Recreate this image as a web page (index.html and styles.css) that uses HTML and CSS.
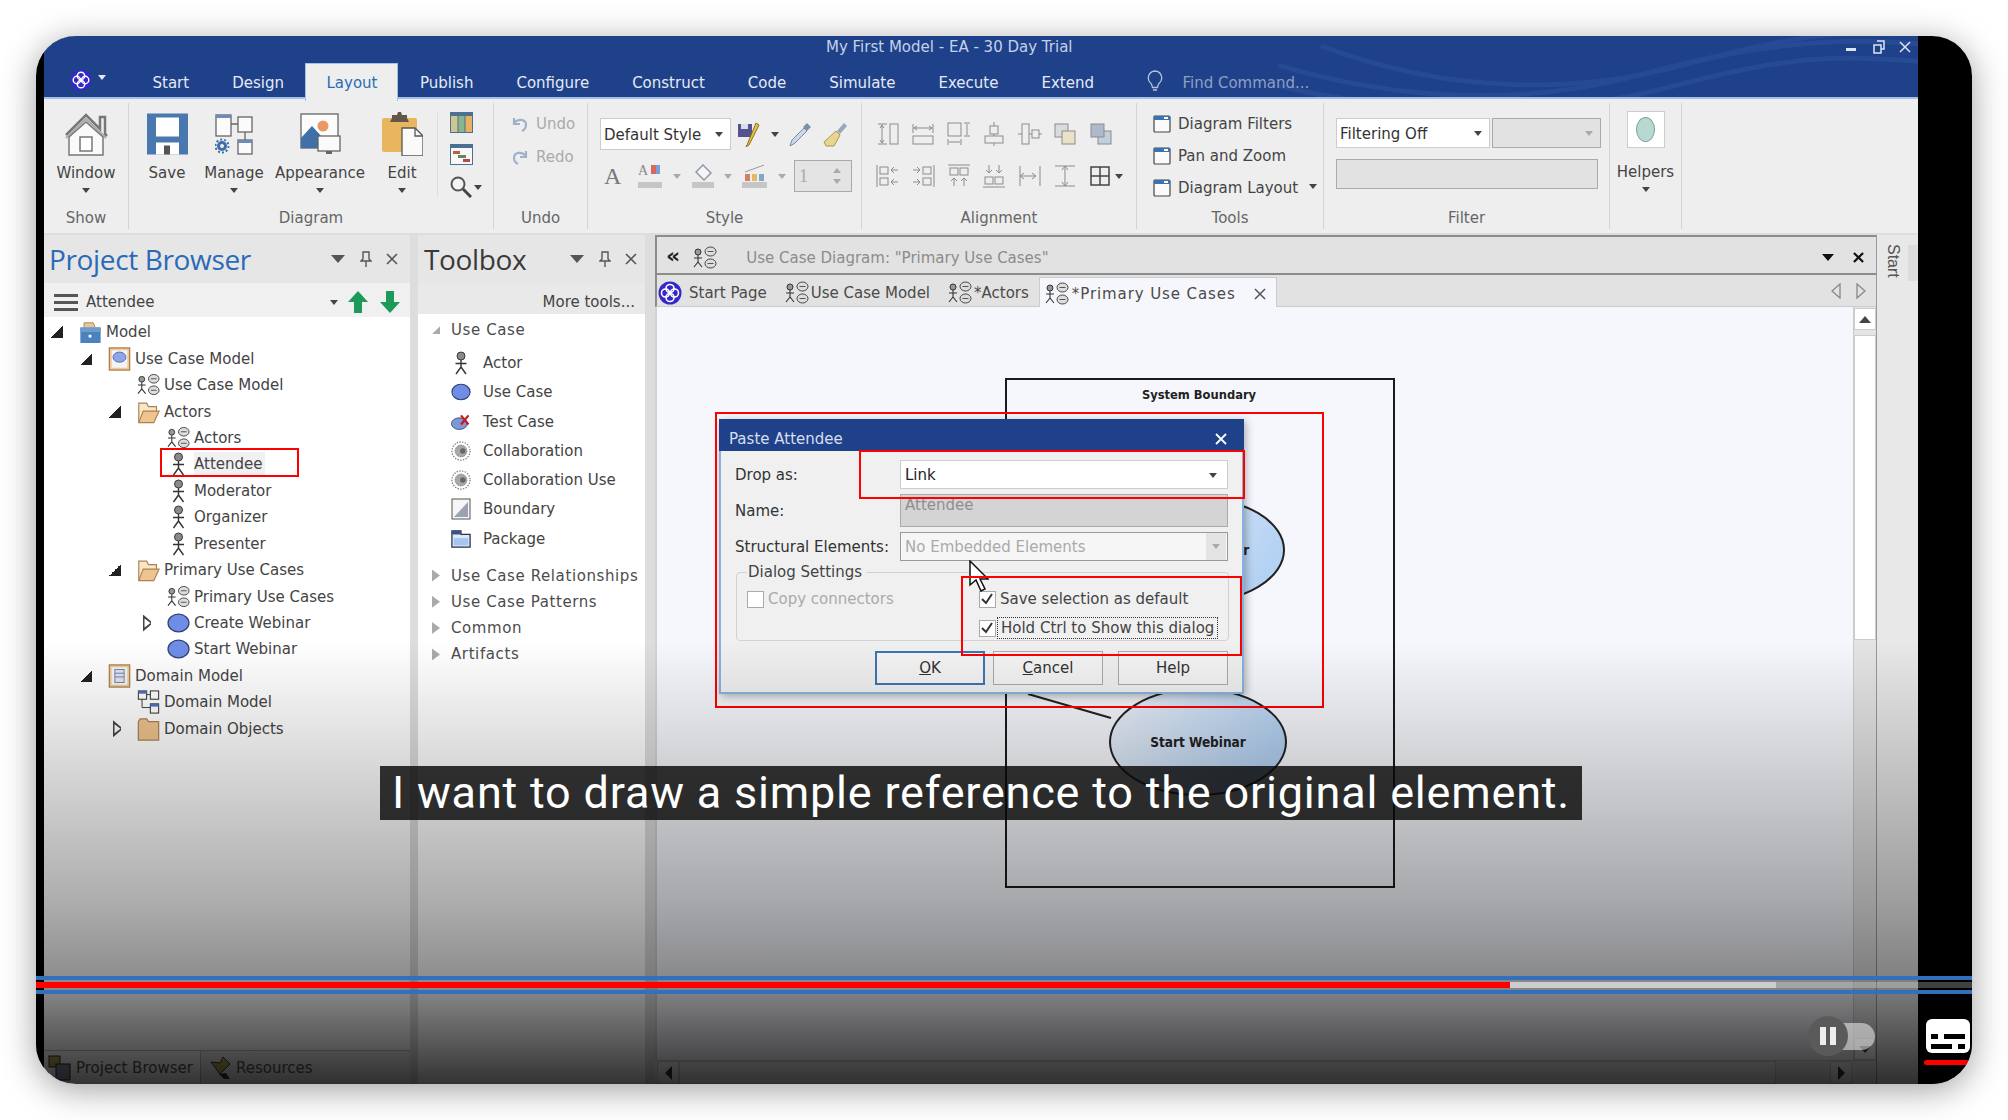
FILE: index.html
```html
<!DOCTYPE html>
<html lang="en">
<head>
    <meta charset="UTF-8">
    <meta name="viewport" content="width=device-width, initial-scale=1.0">
    <title>My First Model - EA - 30 Day Trial</title>
    <link rel="stylesheet" href="styles.css">
</head>
<body>
<svg class="sprite" xmlns="http://www.w3.org/2000/svg">
    <symbol id="logo" viewBox="0 0 24 24"><circle cx="12" cy="12" r="11.5" fill="#3527c9"/><g fill="none" stroke="#fff" stroke-width="1.6"><ellipse cx="12" cy="7.5" rx="4" ry="4"/><ellipse cx="12" cy="16.5" rx="4" ry="4"/><ellipse cx="7.5" cy="12" rx="4" ry="4"/><ellipse cx="16.5" cy="12" rx="4" ry="4"/></g></symbol>
    <symbol id="actor" viewBox="0 0 14 24"><circle cx="7" cy="5" r="4" fill="#8a8a8a" stroke="#3a3a3a"/><path d="M7 9v7M1.5 12.5h11M7 16l-5 7M7 16l5 7" stroke="#333" stroke-width="1.4" fill="none"/></symbol>
    <symbol id="ucd" viewBox="0 0 24 24"><circle cx="5" cy="6" r="3" fill="#999" stroke="#333"/><path d="M5 9v7M1 12h8M5 16l-4 5M5 16l4 5" stroke="#333" stroke-width="1.1" fill="none"/><g fill="#ddd" stroke="#444"><ellipse cx="17.500" cy="5.500" rx="5.500" ry="4.500"/><ellipse cx="17.500" cy="17.500" rx="5.500" ry="4.500"/></g><path d="M14.500 5.500h6M14.500 17.500h6" stroke="#555"/></symbol>
    <symbol id="pkg" viewBox="0 0 24 26"><path d="M5 8V3h10l2 5" fill="#eec694" stroke="#a98355"/><rect x="1" y="8" width="22" height="17" rx="1" fill="#4b82bd"/><rect x="1" y="8" width="22" height="5" fill="#6c9bcd"/><rect x="10" y="16" width="3" height="3" fill="#fff"/></symbol>
    <symbol id="ucmodel" viewBox="0 0 24 26"><rect x="1" y="1" width="22" height="24" fill="#f2c894" stroke="#a98355" stroke-width="1.400"/><rect x="3.500" y="3.500" width="17" height="19" fill="#f4f4f4"/><ellipse cx="12" cy="11" rx="7" ry="5.500" fill="#8ea6e8" stroke="#5469b2"/></symbol>
    <symbol id="dommodel" viewBox="0 0 24 26"><rect x="1" y="1" width="22" height="24" fill="#f2c894" stroke="#a98355" stroke-width="1.400"/><rect x="3.500" y="3.500" width="17" height="19" fill="#f4f4f4"/><rect x="7" y="6" width="10" height="14" fill="#dfe4ef" stroke="#6b7ca8"/><path d="M7 10h10M7 14h10" stroke="#6b7ca8"/></symbol>
    <symbol id="folderopen" viewBox="0 0 26 26"><path d="M2 25V3h9l2 4h9v5" fill="#fbe5c5" stroke="#a98355" stroke-width="1.300"/><path d="M2 25l5-13h18l-6 13z" fill="#f0c48e" stroke="#a98355" stroke-width="1.300"/></symbol>
    <symbol id="folder" viewBox="0 0 24 26"><path d="M1 25V5l2-3h7l2 3h11v20z" fill="#f0c48e" stroke="#a98355" stroke-width="1.300"/></symbol>
    <symbol id="usecase" viewBox="0 0 22 20"><ellipse cx="11" cy="10" rx="10" ry="8.500" fill="#6f8de6" stroke="#33416e" stroke-width="1.200"/></symbol>
    <symbol id="domd" viewBox="0 0 24 26"><g stroke="#333" fill="#fff" stroke-width="1.100"><rect x="1" y="1" width="9" height="9"/><rect x="14" y="1" width="9" height="9"/><rect x="14" y="15" width="9" height="10"/></g><rect x="1" y="1" width="9" height="3" fill="#4f6fc0"/><rect x="14" y="15" width="9" height="3" fill="#4f6fc0"/><path d="M10 5h4M5 10v9h9" stroke="#333" fill="none"/></symbol>
    <symbol id="tcase" viewBox="0 0 24 20"><ellipse cx="10" cy="12" rx="9.500" ry="7" fill="#7d98d6" stroke="#34426e"/><path d="M12 2l9 11M21 2l-9 11" stroke="#c6181f" stroke-width="2.600"/></symbol>
    <symbol id="collab" viewBox="0 0 22 22"><circle cx="11" cy="11" r="10" fill="none" stroke="#777" stroke-width="1.300" stroke-dasharray="1.500 1.500"/><circle cx="11" cy="11" r="6.500" fill="#a8a8a8" stroke="#666" stroke-dasharray="1 1"/><circle cx="13" cy="11" r="3" fill="#666"/></symbol>
    <symbol id="bound" viewBox="0 0 20 22"><rect x="1" y="1" width="18" height="20" fill="#f6f6f6" stroke="#555"/><path d="M3 19L17 4v15z" fill="#9aa2b2"/></symbol>
    <symbol id="tbpkg" viewBox="0 0 22 20"><path d="M1 1h10v4h10v14H1z" fill="#dbe6f7" stroke="#26324f" stroke-width="1.400"/><rect x="1" y="1" width="10" height="4" fill="#3b5184"/><path d="M3 9h16v8H3z" fill="#a8c5ee"/></symbol>
    <symbol id="win" viewBox="0 0 18 18"><rect x="1" y="1" width="16" height="16" rx="1" fill="#fbfbfb" stroke="#444" stroke-width="1.200"/><rect x="1" y="1" width="16" height="4" fill="#3973b3"/><rect x="11" y="2" width="4" height="2" fill="#fff"/></symbol>
</svg>

<div class="video">
    <div class="app">
        <header class="titlebar">
            <svg class="waves" viewBox="0 0 600 63" preserveAspectRatio="none"><g fill="none" stroke="#264a94" stroke-width="5"><path d="M0 30C120 70 240 70 340 40S520 0 600 8"/><path d="M40 10C160 60 280 60 380 30S520 -4 600 -6"/><path d="M-20 46C120 86 260 84 370 52S520 20 600 26"/></g></svg>
            <div class="title-row">
                <span class="app-title">My First Model - EA - 30 Day Trial</span>
                <div class="win-ctl">
                    <span class="min"></span>
                    <svg class="rest" viewBox="0 0 12 14"><path d="M4 1h7v8H8M1 5h7v8H1z" fill="none" stroke="#dce4f2" stroke-width="1.500"/></svg>
                    <svg class="cls" viewBox="0 0 12 12"><path d="M1 1l10 10M11 1L1 11" stroke="#dce4f2" stroke-width="1.500"/></svg>
                </div>
            </div>
            <nav class="tab-row">
                <svg class="logo"><use href="#logo"/></svg>
                <span class="caret wh logo-caret"></span>
                <a class="tab">Start</a>
                <a class="tab">Design</a>
                <a class="tab active">Layout</a>
                <a class="tab">Publish</a>
                <a class="tab">Configure</a>
                <a class="tab">Construct</a>
                <a class="tab">Code</a>
                <a class="tab">Simulate</a>
                <a class="tab">Execute</a>
                <a class="tab">Extend</a>
                <svg class="bulb" viewBox="0 0 16 22"><path d="M8 1a7 7 0 0 0-4 12.500c1 1 1 2.500 1.500 4h5c.5-1.500.5-3 1.500-4A7 7 0 0 0 8 1zM6 20h4" fill="none" stroke="#b6c3dc" stroke-width="1.300"/></svg>
                <span class="find">Find Command...</span>
            </nav>
        </header>

        <section class="ribbon">
            <div class="group g-show">
                <div class="group-body">
                    <div class="big">
                        <svg viewBox="0 0 44 44" width="44" height="44"><path d="M2 23L22 3l14 14V5h5v17l2 2" fill="none" stroke="#777" stroke-width="2.500"/><path d="M2 26L22 7l20 19" fill="none" stroke="#aaa" stroke-width="2"/><path d="M5 25v18h34V25L22 10z" fill="#fafafa" stroke="#777" stroke-width="1.500"/><rect x="16" y="25" width="12" height="14" fill="#fff" stroke="#777" stroke-width="1.500"/></svg>
                        <span class="label">Window</span>
                        <span class="caret"></span>
                    </div>
                </div>
                <div class="group-name">Show</div>
            </div>

            <div class="group g-diagram">
                <div class="group-body">
                    <div class="big w50">
                        <svg viewBox="0 0 41 41" width="41" height="44"><path d="M0 0h41v41H0z" fill="#4878ad"/><rect x="9" y="4" width="23" height="19" fill="#fff"/><rect x="9" y="29" width="23" height="12" fill="#fff"/><rect x="17" y="32" width="6" height="9" fill="#555"/></svg>
                        <span class="label">Save</span>
                    </div>
                    <div class="big w64">
                        <svg viewBox="0 0 38 40" width="38" height="44"><g fill="#fbfbfb" stroke="#666" stroke-width="1.300"><rect x="1" y="1" width="15" height="21"/><rect x="23" y="3" width="14" height="15"/><rect x="23" y="26" width="14" height="14"/></g><rect x="1" y="1" width="15" height="3" fill="#6a8cbb"/><rect x="23" y="26" width="14" height="3" fill="#6a8cbb"/><path d="M16 10h7M30 18v8" stroke="#666" stroke-width="1.300"/><circle cx="7" cy="32" r="5" fill="#3d6fa8"/><circle cx="7" cy="32" r="2" fill="#eee"/><circle cx="7" cy="32" r="6.500" fill="none" stroke="#3d6fa8" stroke-width="2" stroke-dasharray="2 2"/></svg>
                        <span class="label">Manage</span>
                        <span class="caret"></span>
                    </div>
                    <div class="big w94">
                        <svg viewBox="0 0 41 42" width="41" height="44"><rect x="1" y="1" width="37" height="34" fill="#fcfcfc" stroke="#666" stroke-width="1.300"/><circle cx="23" cy="13" r="5.500" fill="#e99a63"/><path d="M1 35V25l11-12 11 12v10z" fill="#3f70a8"/><rect x="18" y="23" width="22" height="15" fill="#fafafa" stroke="#666" stroke-width="1.300"/><path d="M26 38h6v3h-6z" fill="#666"/></svg>
                        <span class="label">Appearance</span>
                        <span class="caret"></span>
                    </div>
                    <div class="big w50 edit">
                        <svg viewBox="0 0 41 44" width="41" height="44"><rect x="0" y="6" width="35" height="34" rx="2" fill="#e8b65e"/><path d="M10 6V3h5l1-3h3l1 3h5v3l2 4H8z" fill="#63574b"/><path d="M20 16h13l8 8v20H20z" fill="#fafafa" stroke="#555" stroke-width="1.300"/><path d="M33 16v8h8" fill="none" stroke="#555" stroke-width="1.300"/></svg>
                        <span class="label">Edit</span>
                        <span class="caret"></span>
                    </div>
                    <div class="vsep"></div>
                    <div class="small-col">
                        <svg viewBox="0 0 23 21" width="23" height="21"><rect width="23" height="21" fill="#4c6f92"/><rect x="1" y="4" width="6.500" height="16" fill="#cbc78e"/><rect x="8.500" y="4" width="6" height="16" fill="#88b48f"/><rect x="15.500" y="4" width="6.500" height="16" fill="#e8b15e"/></svg>
                        <svg viewBox="0 0 23 21" width="23" height="21"><rect x=".5" y=".5" width="22" height="20" fill="#f8f8f8" stroke="#4c6f92"/><rect width="23" height="4" fill="#4c6f92"/><rect x="3" y="7" width="7" height="3" fill="#c25a4a"/><rect x="8" y="11" width="8" height="3" fill="#5a8a62"/><rect x="13" y="15" width="7" height="3" fill="#b84a4a"/></svg>
                        <div class="mag"><svg viewBox="0 0 22 22" width="22" height="22"><circle cx="8" cy="8" r="6.500" fill="#f4f4f4" stroke="#555" stroke-width="2"/><path d="M13 13l8 8" stroke="#444" stroke-width="3"/></svg><span class="caret"></span></div>
                    </div>
                </div>
                <div class="group-name">Diagram</div>
            </div>

            <div class="group g-undo">
                <div class="group-body">
                    <div class="undo-row">
                        <svg viewBox="0 0 18 18" width="18" height="18"><path d="M3 3v6h6M3 8c4-5 12-4 12 2 0 3-2 5-4 6" fill="none" stroke="#9fb3c8" stroke-width="2.200"/></svg>
                        <span>Undo</span>
                    </div>
                    <div class="undo-row">
                        <svg viewBox="0 0 18 18" width="18" height="18"><path d="M15 3v6H9M15 8C11 3 3 4 3 10c0 3 2 5 4 6" fill="none" stroke="#9fb3c8" stroke-width="2.200"/></svg>
                        <span>Redo</span>
                    </div>
                </div>
                <div class="group-name">Undo</div>
            </div>

            <div class="group g-style">
                <div class="group-body">
                    <div class="style-row first">
                        <div class="combo style-combo"><span>Default Style</span><span class="caret"></span></div>
                        <svg class="m7" viewBox="0 0 22 26" width="22" height="26"><rect x="0" y="3" width="14" height="13" fill="#54528f"/><rect x="3" y="3" width="7" height="5" fill="#dcdcf0"/><path d="M18 2L9 24l-1 2 3-2 10-20z" fill="#e5c34a" stroke="#8a6f1c"/></svg>
                        <span class="caret m11"></span>
                        <svg class="m9" viewBox="0 0 24 25" width="24" height="25"><path d="M2 24l2-6L16 6l3 3L7 21z" fill="#cbd8ea" stroke="#7a8aa4"/><path d="M15 5l4-4 4 4-4 4z" fill="#7e8fa8"/></svg>
                        <svg class="m11" viewBox="0 0 24 25" width="24" height="25"><path d="M1 20l12-11 4 4-6 11H3z" fill="#e8d592" stroke="#a99650"/><path d="M14 9l7-8 3 3-7 8z" fill="#9aa8bd"/></svg>
                    </div>
                    <div class="style-row second">
                        <span class="font-a">A</span>
                        <div class="sw"><span class="sw-a">A</span><i></i></div>
                        <span class="caret lt m11"></span>
                        <svg class="m11" viewBox="0 0 22 24" width="22" height="24"><path d="M11 1l8 8-7 7-8-8z" fill="#f5f5f5" stroke="#8a96a8" stroke-width="1.400"/><rect y="18" width="22" height="6" fill="#c6c6c6"/></svg>
                        <span class="caret lt m10"></span>
                        <svg class="m10" viewBox="0 0 25 24" width="25" height="24"><path d="M3 8L22 1" stroke="#999"/><rect x="3" y="10" width="5" height="7" fill="#d87c64"/><rect x="10" y="10" width="5" height="7" fill="#e6b76b"/><rect x="17" y="10" width="5" height="7" fill="#7fa8cf"/><rect y="18" width="25" height="6" fill="#c6c6c6"/></svg>
                        <span class="caret lt m11"></span>
                        <div class="spin"><span>1</span><div class="spin-arrows"><i></i><i></i></div></div>
                    </div>
                </div>
                <div class="group-name">Style</div>
            </div>

            <div class="group g-align">
                <div class="group-body align-grid">
                    <svg viewBox="0 0 24 24"><g fill="none" stroke="#8b8b8b"><rect x="14" y="2" width="8" height="20"/><path d="M2 2h9M2 22h9M6 3v18M4 6l2-3 2 3M4 18l2 3 2-3"/></g></svg>
                    <svg viewBox="0 0 24 24"><g fill="none" stroke="#8b8b8b"><rect x="2" y="14" width="20" height="8"/><path d="M2 2v9M22 2v9M3 6h18M6 4L3 6l3 2M18 4l3 2-3 2"/></g></svg>
                    <svg viewBox="0 0 24 24"><g fill="none" stroke="#8b8b8b"><rect x="1" y="1" width="13" height="13"/><path d="M17 1h6M20 2v11M17 14h6M1 17v6M14 17v6M2 20h11"/></g></svg>
                    <svg viewBox="0 0 24 24"><g fill="none" stroke="#8b8b8b"><rect x="8" y="4" width="8" height="8"/><rect x="3" y="14" width="18" height="7"/><path d="M12 0v4M12 12v2M12 21v3"/></g></svg>
                    <svg viewBox="0 0 24 24"><g fill="none" stroke="#8b8b8b"><rect x="4" y="2" width="7" height="20"/><rect x="14" y="8" width="7" height="8"/><path d="M0 12h4M11 12h3M21 12h3"/></g></svg>
                    <svg viewBox="0 0 24 24"><rect x="2" y="2" width="13" height="13" fill="#d8dbe0" stroke="#8b8b8b"/><rect x="9" y="9" width="13" height="13" fill="#e9e2c6" stroke="#8b8b8b"/></svg>
                    <svg viewBox="0 0 24 24"><rect x="9" y="9" width="13" height="13" fill="#c4cfdd" stroke="#8b8b8b"/><rect x="2" y="2" width="13" height="13" fill="#aebacb" stroke="#8b8b8b"/></svg>
                    <svg viewBox="0 0 24 24"><g fill="none" stroke="#8b8b8b"><path d="M1 1v22"/><rect x="4" y="3" width="8" height="7"/><rect x="4" y="14" width="8" height="7"/><path d="M22 6h-7M18 3l-3 3 3 3M22 18h-7M18 15l-3 3 3 3"/></g></svg>
                    <svg viewBox="0 0 24 24"><g fill="none" stroke="#8b8b8b"><path d="M23 1v22"/><rect x="12" y="3" width="8" height="7"/><rect x="12" y="14" width="8" height="7"/><path d="M2 6h7M6 3l3 3-3 3M2 18h7M6 15l3 3-3 3"/></g></svg>
                    <svg viewBox="0 0 24 24"><g fill="none" stroke="#8b8b8b"><path d="M1 1h22"/><rect x="3" y="4" width="8" height="7"/><rect x="13" y="4" width="8" height="7"/><path d="M7 22v-8M4 17l3-3 3 3M17 22v-8M14 17l3-3 3 3"/></g></svg>
                    <svg viewBox="0 0 24 24"><g fill="none" stroke="#8b8b8b"><path d="M1 23h22"/><rect x="3" y="13" width="8" height="7"/><rect x="13" y="13" width="8" height="7"/><path d="M7 1v8M4 6l3 3 3-3M17 1v8M14 6l3 3 3-3"/></g></svg>
                    <svg viewBox="0 0 24 24"><g fill="none" stroke="#8b8b8b"><path d="M2 2v20M22 2v20M2 12h15M6 9l-4 3 4 3M14 9l4 3-4 3"/></g></svg>
                    <svg viewBox="0 0 24 24"><g fill="none" stroke="#8b8b8b"><path d="M2 2h20M2 22h20M12 2v20M9 6l3-4 3 4M9 18l3 4 3-4"/></g></svg>
                    <div class="grid-btn"><svg viewBox="0 0 22 22" width="22" height="22"><rect x="2" y="2" width="18" height="18" fill="none" stroke="#444" stroke-width="1.500"/><path d="M11 2v18M2 11h18" stroke="#444" stroke-width="1.500"/></svg><span class="caret"></span></div>
                </div>
                <div class="group-name">Alignment</div>
            </div>

            <div class="group g-tools">
                <div class="group-body">
                    <div class="tool-row"><svg width="18" height="18"><use href="#win"/></svg><span>Diagram Filters</span></div>
                    <div class="tool-row"><svg width="18" height="18"><use href="#win"/></svg><span>Pan and Zoom</span></div>
                    <div class="tool-row"><svg width="18" height="18"><use href="#win"/></svg><span>Diagram Layout</span><span class="caret tool-caret"></span></div>
                </div>
                <div class="group-name">Tools</div>
            </div>

            <div class="group g-filter">
                <div class="group-body">
                    <div class="filter-top">
                        <div class="combo filter-combo"><span>Filtering Off</span><span class="caret"></span></div>
                        <div class="combo off-combo"><span class="caret lt"></span></div>
                    </div>
                    <div class="filter-input"></div>
                </div>
                <div class="group-name">Filter</div>
            </div>

            <div class="group g-helpers">
                <div class="group-body">
                    <div class="big">
                        <div class="helper-btn"><span></span></div>
                        <span class="label">Helpers</span>
                        <span class="caret"></span>
                    </div>
                </div>
            </div>
        </section>

        <main class="main">
            <aside class="browser">
                <div class="pane-head">
                    <h2 class="browser-title">Project Browser</h2>
                    <div class="pane-ctl browser-ctl">
                        <span class="caret big-caret"></span>
                        <svg viewBox="0 0 12 16" width="12" height="16"><path d="M3 1h6v7l2 2H1l2-2zM6 10v6" fill="none" stroke="#555" stroke-width="1.400"/></svg>
                        <svg viewBox="0 0 12 12" width="12" height="12"><path d="M1 1l10 10M11 1L1 11" stroke="#555" stroke-width="1.600"/></svg>
                    </div>
                </div>
                <div class="browser-bar">
                    <div class="burger"><i></i><i></i><i></i></div>
                    <span class="bar-name">Attendee</span>
                    <span class="caret bar-caret"></span>
                    <svg class="arr-up" viewBox="0 0 20 22" width="20" height="22"><path d="M10 0l10 11h-6v11H6V11H0z" fill="#1c9a5a"/></svg>
                    <svg class="arr-down" viewBox="0 0 20 22" width="20" height="22"><path d="M10 22L20 11h-6V0H6v11H0z" fill="#1c9a5a"/></svg>
                </div>
                <div class="tree">
                    <div class="row lv1"><span class="tri open"></span><svg class="ico"><use href="#pkg"/></svg><span>Model</span></div>
                    <div class="row lv2"><span class="tri open"></span><svg class="ico"><use href="#ucmodel"/></svg><span>Use Case Model</span></div>
                    <div class="row lv3"><span class="tri"></span><svg class="ico"><use href="#ucd"/></svg><span>Use Case Model</span></div>
                    <div class="row lv3"><span class="tri open"></span><svg class="ico"><use href="#folderopen"/></svg><span>Actors</span></div>
                    <div class="row lv4"><span class="tri"></span><svg class="ico"><use href="#ucd"/></svg><span>Actors</span></div>
                    <div class="row lv4"><span class="tri"></span><svg class="ico"><use href="#actor"/></svg><span class="sel">Attendee</span></div>
                    <div class="row lv4"><span class="tri"></span><svg class="ico"><use href="#actor"/></svg><span>Moderator</span></div>
                    <div class="row lv4"><span class="tri"></span><svg class="ico"><use href="#actor"/></svg><span>Organizer</span></div>
                    <div class="row lv4"><span class="tri"></span><svg class="ico"><use href="#actor"/></svg><span>Presenter</span></div>
                    <div class="row lv3"><span class="tri open"></span><svg class="ico"><use href="#folderopen"/></svg><span>Primary Use Cases</span></div>
                    <div class="row lv4"><span class="tri"></span><svg class="ico"><use href="#ucd"/></svg><span>Primary Use Cases</span></div>
                    <div class="row lv4"><span class="tri shut"></span><svg class="ico"><use href="#usecase"/></svg><span>Create Webinar</span></div>
                    <div class="row lv4"><span class="tri"></span><svg class="ico"><use href="#usecase"/></svg><span>Start Webinar</span></div>
                    <div class="row lv2"><span class="tri open"></span><svg class="ico"><use href="#dommodel"/></svg><span>Domain Model</span></div>
                    <div class="row lv3"><span class="tri"></span><svg class="ico"><use href="#domd"/></svg><span>Domain Model</span></div>
                    <div class="row lv3"><span class="tri shut"></span><svg class="ico"><use href="#folder"/></svg><span>Domain Objects</span></div>
                    <div class="mark tree-mark"></div>
                </div>
                <div class="browser-tabs">
                    <div class="btab on">
                        <svg viewBox="0 0 24 26" width="24" height="26"><rect x="1" y="1" width="11" height="11" fill="#b9a94e" stroke="#333"/><rect x="8" y="9" width="14" height="16" fill="#8a93ad" stroke="#222"/></svg>
                        <span>Project Browser</span>
                    </div>
                    <div class="btab">
                        <svg viewBox="0 0 24 24" width="24" height="24"><path d="M2 6l9 12 10-10-7-7-3 6z" fill="#b9a94e" stroke="#333"/><path d="M10 18l5 5h6l-4-6z" fill="#333"/></svg>
                        <span>Resources</span>
                    </div>
                </div>
            </aside>

            <div class="split"></div>

            <aside class="toolbox">
                <div class="pane-head">
                    <h2 class="toolbox-title">Toolbox</h2>
                    <div class="pane-ctl toolbox-ctl">
                        <span class="caret big-caret"></span>
                        <svg viewBox="0 0 12 16" width="12" height="16"><path d="M3 1h6v7l2 2H1l2-2zM6 10v6" fill="none" stroke="#555" stroke-width="1.400"/></svg>
                        <svg viewBox="0 0 12 12" width="12" height="12"><path d="M1 1l10 10M11 1L1 11" stroke="#555" stroke-width="1.600"/></svg>
                    </div>
                </div>
                <div class="more-tools">More tools...</div>
                <div class="tools-list">
                    <div class="tb-group first">
                        <span class="tb-tri open"></span>Use Case</div>
                    <div class="tb-item"><svg class="tb-ico"><use href="#actor"/></svg><span>Actor</span></div>
                    <div class="tb-item"><svg class="tb-ico"><use href="#usecase"/></svg><span>Use Case</span></div>
                    <div class="tb-item"><svg class="tb-ico"><use href="#tcase"/></svg><span>Test Case</span></div>
                    <div class="tb-item"><svg class="tb-ico"><use href="#collab"/></svg><span>Collaboration</span></div>
                    <div class="tb-item"><svg class="tb-ico"><use href="#collab"/></svg><span>Collaboration Use</span></div>
                    <div class="tb-item"><svg class="tb-ico"><use href="#bound"/></svg><span>Boundary</span></div>
                    <div class="tb-item last"><svg class="tb-ico"><use href="#tbpkg"/></svg><span>Package</span></div>
                    <div class="tb-group"><span class="tb-tri"></span>Use Case Relationships</div>
                    <div class="tb-group"><span class="tb-tri"></span>Use Case Patterns</div>
                    <div class="tb-group"><span class="tb-tri"></span>Common</div>
                    <div class="tb-group"><span class="tb-tri"></span>Artifacts</div>
                </div>
            </aside>

            <div class="split wide"></div>

            <section class="doc">
                <div class="doc-head">
                    <span class="chevrons">«</span>
                    <svg class="doc-ico"><use href="#ucd"/></svg>
                    <span class="doc-title">Use Case Diagram: "Primary Use Cases"</span>
                    <span class="caret doc-caret"></span>
                    <svg class="doc-x" viewBox="0 0 12 12" width="11" height="11"><path d="M1 1l10 10M11 1L1 11" stroke="#111" stroke-width="2.400"/></svg>
                </div>
                <div class="doc-tabs">
                    <div class="dtab first"><svg class="dt-logo"><use href="#logo"/></svg>Start Page</div>
                    <div class="dtab"><svg class="dt-ico"><use href="#ucd"/></svg>Use Case Model</div>
                    <div class="dtab"><svg class="dt-ico"><use href="#ucd"/></svg>*Actors</div>
                    <div class="dtab active"><svg class="dt-ico"><use href="#ucd"/></svg><span class="spaced">*Primary Use Cases</span>
                        <svg class="dt-x" viewBox="0 0 12 12" width="12" height="12"><path d="M1 1l10 10M11 1L1 11" stroke="#555" stroke-width="1.500"/></svg>
                    </div>
                    <div class="tab-nav">
                        <svg viewBox="0 0 10 16" width="10" height="16"><path d="M9 1L1 8l8 7z" fill="none" stroke="#888" stroke-width="1.300"/></svg>
                        <svg viewBox="0 0 10 16" width="10" height="16"><path d="M1 1l8 7-8 7z" fill="none" stroke="#888" stroke-width="1.300"/></svg>
                    </div>
                </div>
                <div class="doc-body">
                    <div class="canvas">
                        <svg class="diagram" viewBox="0 0 1198 753" width="1198" height="753">
                            <defs>
                                <linearGradient id="uc" x1="0" x2="1" y1="0" y2=".4"><stop offset="0" stop-color="#eef3fa"/><stop offset="1" stop-color="#b4d2f3"/></linearGradient>
                            </defs>
                            <rect x="351" y="72" width="388" height="508" fill="none" stroke="#1b1b1b" stroke-width="2"/>
                            <text x="544" y="92" class="dg-text" text-anchor="middle">System Boundary</text>
                            <ellipse cx="541" cy="243" rx="88" ry="52" fill="url(#uc)" stroke="#222" stroke-width="2"/>
                            <text x="541" y="248" class="dg-text big-dg" text-anchor="middle">Create Webinar</text>
                            <ellipse cx="543" cy="435" rx="88" ry="53" fill="url(#uc)" stroke="#222" stroke-width="2"/>
                            <text x="543" y="440" class="dg-text big-dg" text-anchor="middle">Start Webinar</text>
                            <path d="M373 387L456 411" stroke="#222" stroke-width="2"/>
                        </svg>

                        <div class="dialog">
                            <div class="dlg-title"><span>Paste Attendee</span>
                                <svg viewBox="0 0 12 12" width="12" height="12"><path d="M1 1l10 10M11 1L1 11" stroke="#fff" stroke-width="1.800"/></svg>
                            </div>
                            <div class="dlg-body">
                                <div class="dlg-form">
                                    <label>Drop as:</label>
                                    <div class="sel-box f29"><span class="dark">Link</span><span class="caret"></span></div>
                                    <label>Name:</label>
                                    <div class="name-box">Attendee</div>
                                    <label>Structural Elements:</label>
                                    <div class="sel-box f29 off"><span>No Embedded Elements</span><span class="off-arrow"><span class="caret lt"></span></span></div>
                                </div>
                                <fieldset class="dlg-set">
                                    <legend>Dialog Settings</legend>
                                    <div class="set-grid">
                                        <div class="chk off"><span class="box"></span><span>Copy connectors</span></div>
                                        <div class="set-right">
                                            <div class="chk"><span class="box"><svg viewBox="0 0 14 14" width="14" height="14"><path d="M2 7l4 4 6-9" fill="none" stroke="#333" stroke-width="2"/></svg></span><span>Save selection as default</span></div>
                                            <div class="chk"><span class="box"><svg viewBox="0 0 14 14" width="14" height="14"><path d="M2 7l4 4 6-9" fill="none" stroke="#333" stroke-width="2"/></svg></span><span class="focus">Hold Ctrl to Show this dialog</span></div>
                                        </div>
                                    </div>
                                </fieldset>
                                <div class="dlg-btns">
                                    <button class="btn def"><u>O</u>K</button>
                                    <button class="btn"><u>C</u>ancel</button>
                                    <button class="btn help">Help</button>
                                </div>
                            </div>
                        </div>

                        <svg class="cursor" viewBox="0 0 20 32" width="20" height="32"><path d="M1 1v24l6-5 5 11 4-2-5-10h8z" fill="#fff" stroke="#111" stroke-width="1.500"/></svg>

                        <div class="mark box-outer"></div>
                        <div class="mark box-drop"></div>
                        <div class="mark box-chk"></div>
                    </div>
                    <div class="vscroll">
                        <div class="sb-btn"><span class="up"></span></div>
                        <div class="sb-thumb"></div>
                        <div class="sb-btn low"><span class="dn"></span></div>
                    </div>
                </div>
                <div class="hscroll">
                    <div class="hs-btn"><span class="lf"></span></div>
                    <div class="hs-thumb"></div>
                    <div class="hs-btn right"><span class="rt"></span></div>
                </div>
            </section>

            <aside class="side">
                <span class="side-start">Start</span>
                <span class="side-tab"></span>
            </aside>
        </main>
    </div>

    <div class="shade"></div>
    <div class="player-lines">
        <div class="line-blue"></div>
        <div class="track"><div class="loaded"></div><div class="played"></div></div>
        <div class="line-blue"></div>
    </div>
    <div class="caption">I want to draw a simple reference to the original element.</div>
    <div class="toggle"></div>
    <div class="pause"><i></i><i></i></div>
    <div class="cc"><div><i class="s"></i><i class="l"></i></div><div><i class="l"></i><i class="s"></i></div></div>
    <div class="cc-red"></div>
</div>
</body>
</html>
```

FILE: styles.css
```css
* {
    box-sizing: border-box;
}
body {
    margin: 0;
    width: 2008px;
    height: 1120px;
    overflow: hidden;
    background-color: #fff;
    font-family: "DejaVu Sans", sans-serif;
    font-size: 15px;
    color: #444;
}
.sprite {
    display: none;
}
svg {
    display: block;
    flex: none;
}

/* outer rounded video card */
.video {
    position: relative;
    margin: 36px 0 0 36px;
    width: 1936px;
    height: 1048px;
    border-radius: 40px;
    overflow: hidden;
    background-color: #000;
    padding: 0 54px 0 8px;
    box-shadow: 0 6px 34px rgba(0, 0, 0, .38);
}
.app {
    width: 1874px;
    height: 1048px;
    display: flex;
    flex-direction: column;
    background-color: #eee;
}

/* title bar */
.titlebar {
    position: relative;
    height: 63px;
    background-color: #1f4189;
    border-bottom: 2px solid #a4c0e6;
    flex: none;
}
.waves {
    position: absolute;
    right: 0;
    top: 0;
    width: 640px;
    height: 61px;
}
.title-row {
    position: relative;
    height: 27px;
    padding: 1px 0 0 782px;
    display: flex;
    color: #c3d1e9;
    line-height: 20px;
}
.win-ctl {
    margin-left: auto;
    display: flex;
    align-items: flex-start;
    padding: 3px 7px 0 0;
}
.win-ctl .min {
    width: 10px;
    height: 3px;
    margin-top: 8px;
    background-color: #dce4f2;
}
.win-ctl .rest {
    width: 12px;
    height: 14px;
    margin-left: 17px;
}
.win-ctl .cls {
    width: 12px;
    height: 12px;
    margin-left: 14px;
    margin-top: 1px;
}
.tab-row {
    position: relative;
    display: flex;
    align-items: center;
    height: 36px;
    color: #e4eaf5;
    padding-left: 26px;
}
.logo {
    width: 22px;
    height: 22px;
    margin-top: -2px;
}
.logo-caret {
    margin: -8px 25px 0 6px;
}
.tab {
    padding: 0 21.5px;
    height: 36px;
    line-height: 40px;
}
.tab.active {
    background-color: #eee;
    color: #2a6cb5;
    border: 1px solid #a4c0e6;
    border-bottom: none;
    padding: 0 20px;
    height: 38px;
    margin-top: 2px;
    line-height: 38px;
}
.bulb {
    width: 16px;
    height: 22px;
    margin-left: 32px;
}
.find {
    margin-left: 19px;
    padding-top: 3px;
    color: #8f9fc3;
}

/* carets */
.caret {
    display: inline-block;
    flex: none;
    width: 0;
    height: 0;
    border-left: 4px solid transparent;
    border-right: 4px solid transparent;
    border-top: 5px solid #444;
}
.caret.wh {
    border-top-color: #e4eaf5;
}
.caret.lt {
    border-top-color: #aaa;
}

/* ribbon */
.ribbon {
    height: 136px;
    display: flex;
    padding-top: 4px;
    border-bottom: 2px solid #ddd;
    flex: none;
}
.group {
    height: 126px;
    display: flex;
    flex-direction: column;
    border-right: 1px solid #d4d4d4;
}
.group-body {
    height: 104px;
}
.group-name {
    height: 22px;
    line-height: 22px;
    text-align: center;
    color: #666;
}
.big {
    display: flex;
    flex-direction: column;
    align-items: center;
    padding-top: 9px;
}
.big .label {
    margin-top: 7px;
    line-height: 20px;
}
.big .caret {
    margin-top: 5px;
}
.g-show {
    width: 85px;
}
.g-diagram {
    width: 365px;
}
.g-diagram .group-body {
    display: flex;
    padding-left: 13px;
}
.w50 {
    width: 50px;
}
.w64 {
    width: 64px;
    margin-left: 10px;
}
.w94 {
    width: 94px;
    margin-left: 7px;
}
.edit {
    margin-left: 10px;
}
.vsep {
    width: 1px;
    height: 84px;
    margin: 10px 12px 0 10px;
    background-color: #ddd;
}
.small-col {
    padding-top: 9px;
    display: flex;
    flex-direction: column;
    gap: 11px;
}
.mag {
    display: flex;
    align-items: center;
    gap: 2px;
}
.g-undo {
    width: 94px;
}
.g-undo .group-body {
    padding: 4px 0 0 17px;
    color: #aaa;
}
.undo-row {
    display: flex;
    align-items: center;
    height: 33px;
    gap: 7px;
}
.g-style {
    width: 274px;
}
.g-style .group-body {
    padding: 15px 0 0 12px;
}
.style-row {
    display: flex;
    align-items: center;
    height: 32px;
}
.style-row.second {
    margin-top: 10px;
}
.combo {
    display: flex;
    align-items: center;
    justify-content: space-between;
    background-color: #fff;
    border: 1px solid #ccc;
    padding: 1px 7px 0 3px;
    color: #333;
}
.style-combo {
    width: 131px;
    height: 32px;
}
.m7 {
    margin-left: 7px;
}
.m9 {
    margin-left: 9px;
}
.m10 {
    margin-left: 10px;
}
.m11 {
    margin-left: 11px;
}
.font-a {
    margin-left: 4px;
    width: 18px;
    font-family: "Liberation Serif", serif;
    font-size: 24px;
    color: #777;
}
.sw {
    margin-left: 16px;
    width: 24px;
    height: 24px;
    position: relative;
}
.sw-a {
    position: absolute;
    left: 0;
    top: -1px;
    font-size: 14px;
    color: #888;
    font-family: "Liberation Serif", serif;
}
.sw i {
    position: absolute;
    left: 0;
    right: 0;
    bottom: 0;
    height: 6px;
    background-color: #c6c6c6;
}
.sw::after {
    content: "";
    position: absolute;
    right: 2px;
    top: 1px;
    width: 9px;
    height: 9px;
    background: linear-gradient(90deg, #d8685c 50%, #7aa0d8 50%);
}
.spin {
    margin-left: 8px;
    width: 58px;
    height: 32px;
    border: 1px solid #aaa;
    background-color: #e4e4e4;
    color: #aaa;
    font-family: "Liberation Serif", serif;
    font-size: 18px;
    display: flex;
    align-items: center;
    justify-content: space-between;
    padding: 0 10px 0 4px;
}
.spin-arrows {
    display: flex;
    flex-direction: column;
    gap: 6px;
}
.spin-arrows i {
    width: 0;
    height: 0;
    border-left: 4px solid transparent;
    border-right: 4px solid transparent;
    border-bottom: 5px solid #aaa;
}
.spin-arrows i + i {
    border-bottom: none;
    border-top: 5px solid #aaa;
}
.g-align {
    width: 275px;
}
.align-grid {
    display: grid;
    grid-template-columns: repeat(7, 35.5px);
    grid-auto-rows: 42px;
    padding: 10px 0 0 8px;
    align-items: center;
    justify-items: center;
}
.align-grid > svg {
    width: 24px;
    height: 24px;
}
.grid-btn {
    display: flex;
    align-items: center;
    gap: 4px;
    margin-left: 11px;
}
.g-tools {
    width: 187px;
}
.g-tools .group-body {
    padding: 5px 0 0 16px;
}
.tool-row {
    display: flex;
    align-items: center;
    height: 32px;
    gap: 7px;
}
.tool-caret {
    margin: -4px 0 0 4px;
}
.g-filter {
    width: 286px;
}
.g-filter .group-body {
    padding: 15px 0 0 12px;
}
.filter-top {
    display: flex;
    gap: 2px;
}
.filter-combo {
    width: 154px;
    height: 30px;
}
.off-combo {
    width: 109px;
    height: 30px;
    background-color: #e2e2e2;
    border-color: #aaa;
    justify-content: flex-end;
}
.filter-input {
    margin-top: 11px;
    width: 262px;
    height: 30px;
    background-color: #e2e2e2;
    border: 1px solid #aaa;
}
.g-helpers {
    width: 72px;
}
.g-helpers .big {
    padding-top: 8px;
}
.helper-btn {
    width: 38px;
    height: 37px;
    background-color: #fff;
    border: 1px solid #ccc;
    display: flex;
    align-items: center;
    justify-content: center;
}
.helper-btn span {
    width: 19px;
    height: 25px;
    border-radius: 50%;
    background-color: #b8d8d2;
    border: 1px solid #7f9e98;
}
.g-helpers .big .label {
    margin-top: 14px;
}

/* dock panes */
.main {
    flex: 1;
    display: flex;
    min-height: 0;
}
.split {
    width: 8px;
    background-color: #ddd;
    flex: none;
}
.split.wide {
    width: 10px;
}
.browser {
    width: 366px;
    display: flex;
    flex-direction: column;
    background-color: #fff;
    flex: none;
}
.pane-head {
    height: 48px;
    background-color: #e6e6e6;
    display: flex;
    align-items: center;
    flex: none;
}
.pane-head h2 {
    margin: 0;
    font-family: "Open Sans", sans-serif;
    font-weight: 400;
    font-size: 28px;
    line-height: 46px;
    letter-spacing: -.35px;
}
.browser-title {
    padding-left: 5px;
    color: #2a6ab8;
}
.toolbox-title {
    padding-left: 6px;
    color: #3a3a3a;
}
.pane-ctl {
    margin-left: auto;
    display: flex;
    align-items: center;
    gap: 14.5px;
}
.browser-ctl {
    padding-right: 12px;
}
.toolbox-ctl {
    padding-right: 8px;
}
.big-caret {
    border-left-width: 7px;
    border-right-width: 7px;
    border-top-width: 8px;
    border-top-color: #555;
}
.browser-bar {
    height: 34px;
    background-color: #f0f0f0;
    display: flex;
    align-items: center;
    padding: 4px 0 0 10px;
    flex: none;
}
.burger {
    width: 24px;
    display: flex;
    flex-direction: column;
    gap: 4px;
}
.burger i {
    height: 3px;
    background-color: #555;
}
.bar-name {
    margin-left: 8px;
}
.bar-caret {
    margin-left: auto;
}
.arr-up {
    margin-left: 10px;
}
.arr-down {
    margin: 0 10px 0 12px;
}
.tree {
    position: relative;
    flex: 1;
    padding-top: 2px;
}
.row {
    display: flex;
    align-items: center;
    height: 26.45px;
    white-space: nowrap;
}
.lv1 { padding-left: 7px; }
.lv2 { padding-left: 36px; }
.lv3 { padding-left: 65px; }
.lv4 { padding-left: 95px; }
.tri {
    width: 12px;
    height: 12px;
    margin-right: 16px;
    flex: none;
}
.tri.open {
    background: linear-gradient(135deg, transparent 50%, #222 50%);
}
.tri.shut {
    position: relative;
    height: 17px;
    background: #444;
    clip-path: polygon(4px 0, 14px 50%, 4px 100%);
}
.tri.shut::after {
    content: "";
    position: absolute;
    inset: 0;
    background: #fff;
    clip-path: polygon(5.5px 4px, 11.5px 50%, 5.5px 13px);
}
.ico {
    width: 23px;
    height: 24px;
    margin-right: 4px;
}
.row .sel {
    background-color: #f1f1f1;
    padding: 3px 3px 3px 0;
}
.browser-tabs {
    height: 34px;
    display: flex;
    border-top: 1px solid #bbb;
    background-color: #eee;
    flex: none;
}
.btab {
    display: flex;
    align-items: center;
    gap: 3px;
    height: 33px;
    padding: 0 6px 0 8px;
    color: #555;
    white-space: nowrap;
}
.btab.on {
    background-color: #fff;
    width: 157px;
    border-right: 1px solid #bbb;
    padding: 0 4px;
    gap: 4px;
}

/* toolbox */
.toolbox {
    width: 227px;
    display: flex;
    flex-direction: column;
    background-color: #fff;
    flex: none;
    overflow: hidden;
}
.more-tools {
    height: 31px;
    padding: 10px 10px 0 0;
    line-height: 18px;
    background-color: #e9e9e9;
    text-align: right;
    flex: none;
}
.tools-list {
    padding-top: 3px;
}
.tb-group {
    display: flex;
    align-items: center;
    height: 26.3px;
    padding-left: 14px;
    letter-spacing: .6px;
    white-space: nowrap;
    color: #4c4c4c;
}
.tb-group.first {
    margin-bottom: 5px;
}
.tb-tri {
    width: 8px;
    height: 12px;
    margin-right: 11px;
    flex: none;
    background: #aaa;
    clip-path: polygon(0 0, 100% 50%, 0 100%);
}
.tb-tri.open {
    height: 8px;
    clip-path: polygon(100% 0, 100% 100%, 0 100%);
}
.tb-item {
    display: flex;
    align-items: center;
    height: 29.3px;
    padding-left: 33px;
}
.tb-item.last {
    margin-bottom: 9px;
}
.tb-ico {
    width: 20px;
    height: 24px;
    margin-right: 12px;
}

/* document */
.doc {
    width: 1221px;
    display: flex;
    flex-direction: column;
    flex: none;
    background-color: #f6f7fc;
}
.doc-head {
    height: 40px;
    background-color: #e2e2e2;
    border-top: 2px solid #8c8c8c;
    border-bottom: 2px solid #8c8c8c;
    border-left: 2px solid #8c8c8c;
    display: flex;
    align-items: center;
    flex: none;
    padding: 5px 0 0 9px;
}
.chevrons {
    font-size: 22px;
    line-height: 30px;
    margin-top: -4px;
    font-weight: bold;
    color: #222;
}
.doc-ico {
    width: 24px;
    height: 24px;
    margin-left: 13px;
}
.doc-title {
    margin-left: 29px;
    color: #8c8c8c;
}
.doc-caret {
    margin-left: auto;
    border-left-width: 6px;
    border-right-width: 6px;
    border-top-width: 7px;
    border-top-color: #111;
}
.doc-x {
    margin: 0 12px 0 19px;
}
.doc-tabs {
    height: 32px;
    background-color: #e2e2e2;
    border-bottom: 1px solid #ccc;
    border-left: 2px solid #8c8c8c;
    display: flex;
    align-items: flex-end;
    flex: none;
    padding-left: 1px;
}
.dtab {
    display: flex;
    align-items: center;
    height: 30px;
    padding: 3px 9px 0;
    color: #4a4a4a;
    white-space: nowrap;
}
.dtab.first {
    padding: 3px 9px 0 0;
}
.dt-logo {
    width: 24px;
    height: 24px;
    margin-right: 7px;
}
.dt-ico {
    width: 24px;
    height: 24px;
    margin-right: 2px;
}
.dtab.active {
    background-color: #f6f7fc;
    border: 1px solid #ccc;
    border-bottom: none;
    padding: 3px 10px 0 5px;
    margin-left: 1px;
    height: 30px;
    margin-bottom: -1px;
}
.spaced {
    margin-left: 1px;
    letter-spacing: .9px;
}
.dt-x {
    margin-left: 18px;
}
.tab-nav {
    margin-left: auto;
    display: flex;
    gap: 15px;
    padding: 0 10px 7px 0;
}
.doc-body {
    flex: 1;
    display: flex;
    min-height: 0;
    border-left: 2px solid #d2d2d2;
}
.canvas {
    position: relative;
    flex: 1;
    min-width: 0;
    overflow: hidden;
    background-color: #f6f7fc;
}
.diagram {
    position: absolute;
    left: -2px;
    top: 0;
}
.dg-text {
    font-family: "DejaVu Sans Condensed", "DejaVu Sans", sans-serif;
    font-weight: bold;
    font-size: 12.8px;
    fill: #222;
}
.big-dg {
    font-size: 13.5px;
}

/* paste dialog */
.dialog {
    position: absolute;
    left: 62px;
    top: 112px;
    width: 525px;
    height: 275px;
    background-color: #f0f0f0;
    border: 2px solid #86b2e2;
    border-top: none;
    box-shadow: 2px 2px 8px rgba(0, 0, 0, .3);
    display: flex;
    flex-direction: column;
}
.dlg-title {
    height: 32px;
    margin: 0 -2px;
    background-color: #1f4189;
    color: #d6deef;
    display: flex;
    align-items: center;
    justify-content: space-between;
    padding: 7px 17px 0 10px;
    flex: none;
}
.dlg-body {
    flex: 1;
    padding: 9px 14px 0;
}
.dlg-form {
    display: grid;
    grid-template-columns: 165px 1fr;
    row-gap: 5px;
    align-items: center;
}
.dlg-form label {
    color: #333;
}
.sel-box {
    display: flex;
    align-items: center;
    justify-content: space-between;
    background-color: #fff;
    border: 1px solid #ccc;
    padding: 1px 10px 0 4px;
}
.f29 {
    height: 29px;
}
.dark {
    color: #222;
}
.sel-box.off {
    background-color: #f6f6f6;
    border-color: #999;
    color: #aaa;
    padding: 0 1px 0 4px;
}
.off-arrow {
    width: 20px;
    height: 27px;
    background-color: #e4e4e4;
    display: flex;
    align-items: center;
    justify-content: center;
}
.name-box {
    height: 33px;
    background-color: #d4d4d4;
    border: 1px solid #aaa;
    color: #8f8f8f;
    padding: 1px 0 0 4px;
    line-height: 18px;
}
.dlg-set {
    margin: 2px 0 0 1px;
    width: 493px;
    height: 78px;
    padding: 9px 0 0 10px;
    border: 1px solid #d2d2d2;
    border-radius: 4px;
}
.dlg-set legend {
    padding: 0 4px 0 1px;
    line-height: 18px;
    color: #444;
}
.set-grid {
    display: grid;
    grid-template-columns: 232px 1fr;
}
.set-right {
    display: flex;
    flex-direction: column;
    gap: 11px;
}
.chk {
    display: flex;
    align-items: center;
    height: 18px;
    gap: 4px;
    white-space: nowrap;
}
.chk.off {
    color: #aaa;
}
.box {
    width: 17px;
    height: 17px;
    background-color: #fff;
    border: 1px solid #aaa;
    flex: none;
}
.focus {
    outline: 1px dotted #333;
    outline-offset: 1px;
    padding: 0 2px;
    margin-left: -1px;
}
.dlg-btns {
    display: flex;
    justify-content: flex-end;
    margin-top: 10px;
}
.btn {
    width: 110px;
    height: 34px;
    font: inherit;
    color: #333;
    background-color: #f4f4f4;
    border: 1px solid #aaa;
    margin-left: 8px;
}
.btn.def {
    border: 2px solid #3a78b0;
}
.btn.help {
    margin-left: 15px;
}
.cursor {
    position: absolute;
    left: 312px;
    top: 253px;
}

/* red annotation boxes */
.mark {
    position: absolute;
    border: 2px solid #f00;
}
.tree-mark {
    left: 116px;
    top: 131px;
    width: 139px;
    height: 29px;
}
.box-outer {
    left: 58px;
    top: 105px;
    width: 609px;
    height: 296px;
}
.box-drop {
    left: 202px;
    top: 143px;
    width: 386px;
    height: 49px;
}
.box-chk {
    left: 304px;
    top: 269px;
    width: 281px;
    height: 80px;
}

/* scrollbars */
.vscroll {
    width: 23px;
    background-color: #e4e4e4;
    border-left: 1px solid #ccc;
    flex: none;
    padding-top: 1px;
    display: flex;
    flex-direction: column;
}
.sb-btn {
    height: 22px;
    background-color: #fff;
    border: 1px solid #ccc;
    display: flex;
    align-items: center;
    justify-content: center;
    flex: none;
}
.sb-btn.low {
    margin-top: auto;
}
.sb-thumb {
    height: 305px;
    margin-top: 5px;
    background-color: #fff;
    border: 1px solid #ccc;
}
.up, .dn {
    width: 0;
    height: 0;
    border-left: 6px solid transparent;
    border-right: 6px solid transparent;
    border-bottom: 7px solid #444;
}
.dn {
    border-bottom: none;
    border-top: 7px solid #444;
}
.hscroll {
    height: 24px;
    display: flex;
    background-color: #e8e8e8;
    border-top: 1px solid #ccc;
    flex: none;
    padding: 0 24px 0 2px;
}
.hs-btn {
    width: 22px;
    background-color: #f4f4f4;
    border: 1px solid #ccc;
    display: flex;
    align-items: center;
    justify-content: center;
    flex: none;
}
.hs-btn.right {
    margin-left: auto;
}
.hs-thumb {
    width: 1097px;
    background-color: #f2f2f2;
    border: 1px solid #ccc;
}
.lf, .rt {
    width: 0;
    height: 0;
    border-top: 7px solid transparent;
    border-bottom: 7px solid transparent;
    border-right: 7px solid #333;
}
.rt {
    border-right: none;
    border-left: 7px solid #333;
}

/* right hand collapsed pane */
.side {
    position: relative;
    width: 42px;
    flex: none;
    background-color: #e8e8e8;
    border-left: 1px solid #999;
}
.side-start {
    position: absolute;
    left: 7px;
    top: 9px;
    writing-mode: vertical-rl;
    font-family: "Liberation Sans", sans-serif;
    font-size: 16px;
    color: #555;
}
.side-tab {
    position: absolute;
    right: 0;
    top: 10px;
    width: 10px;
    height: 36px;
    background-color: #dcdcdc;
}

/* player overlays */
.shade {
    position: absolute;
    left: 0;
    right: 0;
    top: 604px;
    bottom: 0;
    background: linear-gradient(rgba(0, 0, 0, 0), rgba(0, 0, 0, .32) 59%, rgba(0, 0, 0, .46) 78%, rgba(0, 0, 0, .69) 93%, rgba(0, 0, 0, .8));
}
.player-lines {
    position: absolute;
    left: 0;
    right: 0;
    top: 940px;
}
.line-blue {
    height: 4px;
    background-color: #3370bc;
}
.track {
    position: relative;
    height: 6px;
    margin: 2px 0;
    background-color: rgba(255, 255, 255, .25);
}
.loaded {
    position: absolute;
    left: 0;
    top: 0;
    height: 6px;
    width: 1740px;
    background-color: #cdcdcd;
}
.played {
    position: absolute;
    left: 0;
    top: 0;
    height: 6px;
    width: 1474px;
    background-color: #f00;
}
.caption {
    position: absolute;
    left: 344px;
    top: 730px;
    height: 54px;
    padding: 0 12px;
    line-height: 54px;
    font-family: Roboto, sans-serif;
    font-size: 45px;
    letter-spacing: .8px;
    color: #fff;
    white-space: nowrap;
    background-color: rgba(8, 8, 8, .82);
}
.toggle {
    position: absolute;
    left: 1785px;
    top: 987px;
    width: 54px;
    height: 27px;
    border-radius: 14px;
    background-color: rgba(255, 255, 255, .5);
}
.pause {
    position: absolute;
    left: 1772px;
    top: 980px;
    width: 40px;
    height: 40px;
    border-radius: 50%;
    background-color: #5a5a5a;
    display: flex;
    align-items: center;
    justify-content: center;
    gap: 4px;
}
.pause i {
    width: 6px;
    height: 18px;
    background-color: #eee;
}
.cc {
    position: absolute;
    left: 1890px;
    top: 983px;
    width: 44px;
    height: 34px;
    border-radius: 6px;
    background-color: #fff;
    padding: 15px 5px 0;
    display: flex;
    flex-direction: column;
    gap: 5px;
}
.cc div {
    display: flex;
    gap: 6px;
}
.cc i {
    height: 5px;
    background-color: #000;
}
.cc div:first-child .s {
    width: 7px;
}
.cc div:first-child .l {
    width: 21px;
}
.cc div:last-child .l {
    width: 22px;
}
.cc div:last-child .s {
    width: 7px;
}
.cc-red {
    position: absolute;
    left: 1888px;
    top: 1024px;
    width: 48px;
    height: 5px;
    border-radius: 3px 0 0 3px;
    background-color: #f00;
}
```
